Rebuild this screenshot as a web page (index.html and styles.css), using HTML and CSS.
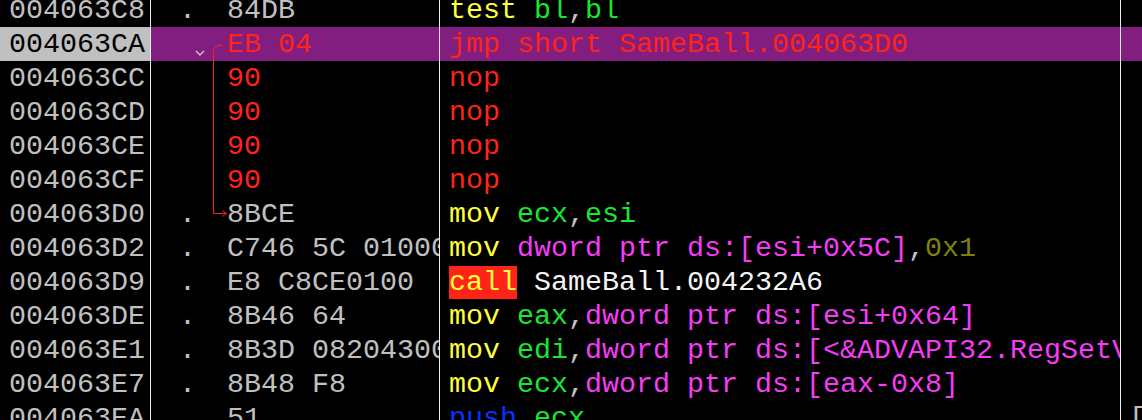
FILE: index.html
```html
<!DOCTYPE html>
<html>
<head>
<meta charset="utf-8">
<link rel="stylesheet" href="styles.css">
</head>
<body>
<div class="view">
  <div class="row"><div class="addr">004063C8</div><div class="bytes"><span class="mark">.</span><span>84DB</span></div><div class="dis"><span class="y">test</span> <span class="g">bl</span><span class="p">,</span><span class="g">bl</span></div><div class="cmt"></div></div>
  <div class="row sel"><div class="addr">004063CA</div><div class="bytes"><span class="mark"></span><span class="r">EB 04</span></div><div class="dis"><span class="r">jmp short SameBall.004063D0</span></div><div class="cmt"></div></div>
  <div class="row"><div class="addr">004063CC</div><div class="bytes"><span class="mark"></span><span class="r">90</span></div><div class="dis"><span class="r">nop</span></div><div class="cmt"></div></div>
  <div class="row"><div class="addr">004063CD</div><div class="bytes"><span class="mark"></span><span class="r">90</span></div><div class="dis"><span class="r">nop</span></div><div class="cmt"></div></div>
  <div class="row"><div class="addr">004063CE</div><div class="bytes"><span class="mark"></span><span class="r">90</span></div><div class="dis"><span class="r">nop</span></div><div class="cmt"></div></div>
  <div class="row"><div class="addr">004063CF</div><div class="bytes"><span class="mark"></span><span class="r">90</span></div><div class="dis"><span class="r">nop</span></div><div class="cmt"></div></div>
  <div class="row"><div class="addr">004063D0</div><div class="bytes"><span class="mark">.</span><span>8BCE</span></div><div class="dis"><span class="y">mov</span> <span class="g">ecx</span><span class="p">,</span><span class="g">esi</span></div><div class="cmt"></div></div>
  <div class="row"><div class="addr">004063D2</div><div class="bytes"><span class="mark">.</span><span>C746 5C 01000000</span></div><div class="dis"><span class="y">mov</span> <span class="m">dword ptr ds:[esi+0x5C]</span><span class="p">,</span><span class="o">0x1</span></div><div class="cmt"></div></div>
  <div class="row"><div class="addr">004063D9</div><div class="bytes"><span class="mark">.</span><span>E8 C8CE0100</span></div><div class="dis"><span class="call">call</span> <span class="w">SameBall.004232A6</span></div><div class="cmt"></div></div>
  <div class="row"><div class="addr">004063DE</div><div class="bytes"><span class="mark">.</span><span>8B46 64</span></div><div class="dis"><span class="y">mov</span> <span class="g">eax</span><span class="p">,</span><span class="m">dword ptr ds:[esi+0x64]</span></div><div class="cmt"></div></div>
  <div class="row"><div class="addr">004063E1</div><div class="bytes"><span class="mark">.</span><span>8B3D 08204300</span></div><div class="dis"><span class="y">mov</span> <span class="g">edi</span><span class="p">,</span><span class="m">dword ptr ds:[&lt;&amp;ADVAPI32.RegSetValueExA&gt;]</span></div><div class="cmt"></div></div>
  <div class="row"><div class="addr">004063E7</div><div class="bytes"><span class="mark">.</span><span>8B48 F8</span></div><div class="dis"><span class="y">mov</span> <span class="g">ecx</span><span class="p">,</span><span class="m">dword ptr ds:[eax-0x8]</span></div><div class="cmt"></div></div>
  <div class="row"><div class="addr">004063EA</div><div class="bytes"><span class="mark">.</span><span>51</span></div><div class="dis"><span class="b">push</span> <span class="g">ecx</span></div><div class="cmt"><span class="p">[</span></div></div>
</div>
<svg class="jump" width="260" height="240" viewBox="0 0 260 240" xmlns="http://www.w3.org/2000/svg">
  <path d="M196 51 L200 55 L204 51" fill="none" stroke="#c8c8c8" stroke-width="1.4"/>
  <path d="M222 45.5 H217.5 L213.5 49.5 V213.5 H226" fill="none" stroke="#ff2318" stroke-width="1"/>
  <path d="M222.5 210.5 L226.5 213.5 L222.5 216.5" fill="none" stroke="#ff2318" stroke-width="1"/>
</svg>
</body>
</html>
```
FILE: styles.css
```css
html, body {
  margin: 0;
  padding: 0;
  background: #000;
  overflow: hidden;
}
body {
  position: relative;
  width: 1142px;
  height: 420px;
  font-family: "Liberation Mono", "DejaVu Sans Mono", monospace;
  font-size: 28.33px;
  color: #c0c0c0;
}
.view {
  margin-top: -7px;
}
.row {
  display: flex;
  height: 34px;
  line-height: 36px;
  white-space: pre;
}
.addr {
  box-sizing: border-box;
  width: 151px;
  flex: none;
  padding-left: 9px;
  border-right: 1px solid #ececec;
  overflow: hidden;
}
.bytes {
  box-sizing: border-box;
  width: 289px;
  flex: none;
  padding-left: 28px;
  border-right: 1px solid #ececec;
  overflow: hidden;
  display: flex;
}
.mark {
  width: 48px;
  flex: none;
}
.dis {
  box-sizing: border-box;
  width: 681px;
  flex: none;
  padding-left: 9px;
  border-right: 1px solid #ececec;
  overflow: hidden;
}
.cmt {
  flex: 1;
  padding-left: 8px;
  overflow: hidden;
}
.sel .addr {
  background: #c0c0c0;
  color: #000;
}
.sel .bytes,
.sel .dis,
.sel .cmt {
  background: #811e7f;
}
.r { color: #ff2318; }
.y { color: #ffff3c; }
.g { color: #19e632; }
.m { color: #f53cf5; }
.o { color: #80800f; }
.w { color: #f4f4f4; }
.b { color: #0a32ff; }
.p { color: #c0c0c0; }
.call {
  background: #ff2318;
  color: #ffff3c;
}
.jump {
  position: absolute;
  left: 0;
  top: 0;
}
```
